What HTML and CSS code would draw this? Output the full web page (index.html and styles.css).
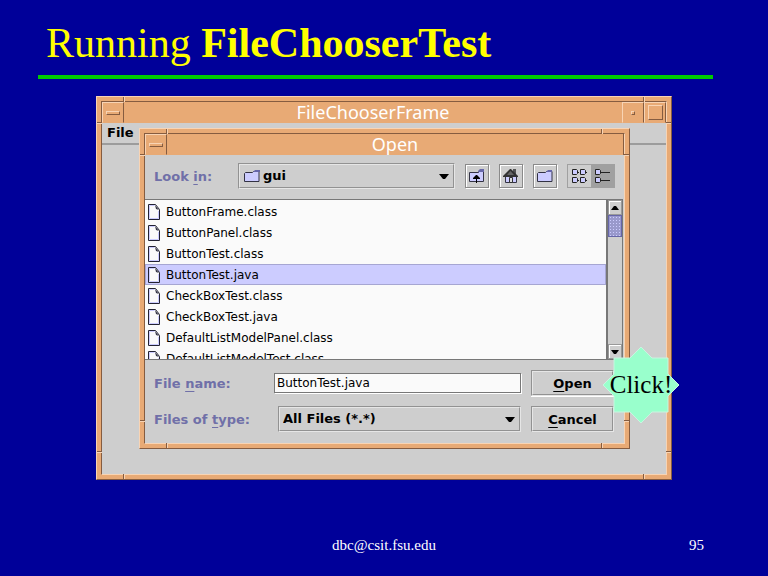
FILE: index.html
```html
<!DOCTYPE html>
<html lang="en">
<head>
  <meta charset="UTF-8" />
  <meta name="viewport" content="width=device-width, initial-scale=1.0" />
  <title>Running FileChooserTest</title>
  <link rel="stylesheet" href="styles.css">
</head>
<body>
  <header class="slide-header">
    <h1>Running <b>FileChooserTest</b></h1>
  </header>

  <main class="window frame">
    <i class="notch top left"></i><i class="notch top right"></i>
    <i class="notch bottom left"></i><i class="notch bottom right"></i>
    <i class="notch side west high"></i><i class="notch side east high"></i>
    <i class="notch side west low"></i><i class="notch side east low"></i>
    <div class="window-inner">
      <div class="titlebar">
        <button class="title-btn menu-btn" aria-label="Window menu"><span class="bar"></span></button>
        <h2>FileChooserFrame</h2>
        <button class="title-btn" aria-label="Minimize"><span class="dot"></span></button>
        <button class="title-btn" aria-label="Maximize"><span class="square"></span></button>
      </div>
      <nav class="menubar"><button class="menu-item">File</button></nav>
    </div>

    <section class="window dialog">
      <i class="notch top left"></i><i class="notch top right"></i>
      <i class="notch bottom left"></i><i class="notch bottom right"></i>
      <i class="notch side west high"></i><i class="notch side east high"></i>
      <i class="notch side west low"></i><i class="notch side east low"></i>
      <div class="window-inner">
        <div class="titlebar">
          <button class="title-btn menu-btn" aria-label="Window menu"><span class="bar"></span></button>
          <h2>Open</h2>
          <span class="title-end"></span>
        </div>

        <div class="toolbar">
          <label for="lookIn">Look <u>i</u>n:</label>
          <div class="combo folder-combo">
            <svg class="combo-icon" width="16" height="14" viewBox="0 0 16 14">
              <path d="M.5 12.500V4.500l1-1h7l1-1h5.500v10z" fill="#ccccff" stroke="#333344"/>
              <path d="M9 3l2-2h5v2z" fill="#6666a8"/>
            </svg>
            <select id="lookIn"><option>gui</option></select>
            <svg class="arrow" width="10" height="6" viewBox="0 0 10 6"><path d="M0 0h10L6 5H4z"/></svg>
          </div>
          <button class="tool-btn" aria-label="Up one level">
            <svg width="16" height="16" viewBox="0 0 16 16">
              <path d="M.5 13.500v-9h9v-1h5v10z" fill="#ccccff" stroke="#333344"/>
              <path d="M9 3l2-2h4v3H9z" fill="#6666a8"/>
              <path d="M7 7h1l3 3v1H8v4H7v-4H4v-1z"/>
            </svg>
          </button>
          <button class="tool-btn" aria-label="Home">
            <svg width="16" height="16" viewBox="0 0 16 16">
              <path d="M10 1h3v5h-3z" fill="#555"/>
              <path d="M2.500 7.500h11v7h-11z" fill="#ccccff" stroke="#333344"/>
              <path d="M7 1h1l7 7v1H0V8z" fill="#333"/>
              <path d="M4 7h7L7.500 3z" fill="#666"/>
              <path d="M6.500 9.500h3v5h-3z" fill="#ddd" stroke="#333"/>
            </svg>
          </button>
          <button class="tool-btn" aria-label="New folder">
            <svg width="16" height="14" viewBox="0 0 16 14">
              <path d="M.5 12.500V4.500l1-1h7l1-1h5.500v10z" fill="#ccccff" stroke="#333344"/>
              <path d="M9 3l2-2h4v2z" fill="#6666a8"/>
            </svg>
          </button>
          <div class="view-toggle">
            <button aria-label="List">
              <svg width="16" height="14" viewBox="0 0 16 14">
                <path d="M1 1h4v4H1zM9 1h4v4H9zM1 9h4v4H1zM9 9h4v4H9z" fill="#ccccff"/>
                <path d="M.5.5h4l1 1v3l-1 1h-4zM8.500.5h4l1 1v3l-1 1h-4zM.5 8.500h4l1 1v3l-1 1h-4zM8.500 8.500h4l1 1v3l-1 1h-4zM5 3.500h2M13 3.500h2M5 11.500h2M13 11.500h2" fill="none" stroke="#222"/>
              </svg>
            </button>
            <button class="pressed" aria-label="Details">
              <svg width="16" height="14" viewBox="0 0 16 14">
                <path d="M1 1h4v4H1zM1 9h4v4H1z" fill="#ccccff"/>
                <path d="M.5.5h4l1 1v3l-1 1h-4zM.5 8.500h4l1 1v3l-1 1h-4zM6 3.500h9M6 11.500h9" fill="none" stroke="#222"/>
              </svg>
            </button>
          </div>
        </div>

        <div class="file-pane">
          <ul class="file-list" id="fileList"></ul>
          <div class="scrollbar">
            <button aria-label="Scroll up"><svg width="8" height="4" viewBox="0 0 8 4"><path d="M3 0h2l3 4H0z"/></svg></button>
            <div class="thumb"></div>
            <button class="down" aria-label="Scroll down"><svg width="8" height="4" viewBox="0 0 8 4"><path d="M0 0h8L5 4H3z"/></svg></button>
          </div>
        </div>

        <form class="controls" onsubmit="return false">
          <div class="row">
            <label for="fileName">File <u>n</u>ame:</label>
            <input type="text" id="fileName" value="ButtonTest.java" />
            <button class="action open"><u>O</u>pen</button>
          </div>
          <div class="row">
            <label for="fileType">Files of <u>t</u>ype:</label>
            <div class="combo type-combo">
              <select id="fileType"><option>All Files (*.*)</option></select>
              <svg class="arrow" width="10" height="6" viewBox="0 0 10 6"><path d="M0 0h10L6 5H4z"/></svg>
            </div>
            <button class="action" type="button"><u>C</u>ancel</button>
          </div>
        </form>
      </div>

      <div class="callout">
        <svg width="78" height="78" viewBox="0 0 78 78">
          <path d="M39 1l11 11h16v16l11 11-11 11v16H50L39 77 28 66H12V50L1 39l11-11V12h16z" fill="#99ffcc" stroke="#c8f5e0"/>
        </svg>
        <span>Click!</span>
      </div>
    </section>
  </main>

  <footer class="slide-footer">
    <span></span>
    <span>dbc@csit.fsu.edu</span>
    <span class="page">95</span>
  </footer>

  <script>
    const files = [
      'ButtonFrame.class',
      'ButtonPanel.class',
      'ButtonTest.class',
      'ButtonTest.java',
      'CheckBoxTest.class',
      'CheckBoxTest.java',
      'DefaultListModelPanel.class',
      'DefaultListModelTest.class'
    ];
    const list = document.getElementById('fileList');
    const fileName = document.getElementById('fileName');

    const icon = `
      <svg width="12" height="16" viewBox="0 0 12 16">
        <path d="M.5.5h7l4 5v10H.5z" fill="#fafafa" stroke="#222233"/>
        <path d="M1.500 14.500v-13h5M2 14.500h8.500V7" fill="none" stroke="#ccccff"/>
        <path d="M7 1l4 5-3-1z" fill="#333344"/>
      </svg>`;

    function renderList(selected) {
      list.innerHTML = '';
      files.forEach(name => {
        const item = document.createElement('li');
        item.innerHTML = `<button class="file">${icon}${name}</button>`;
        if (name === selected) item.classList.add('selected');
        item.addEventListener('click', () => {
          fileName.value = name;
          renderList(name);
        });
        list.appendChild(item);
      });
    }

    renderList(fileName.value);
  </script>
</body>
</html>
```
FILE: styles.css
```css
* {
  box-sizing: border-box;
}

body {
  margin: 0;
  min-height: 100vh;
  display: flex;
  flex-direction: column;
  background: #000099;
  font-family: "Liberation Serif", serif;
}

svg {
  display: block;
  flex-shrink: 0;
}

button, input, select {
  margin: 0;
  padding: 0;
  border: none;
  border-radius: 0;
  background: none;
  color: #000;
  font: bold 13px "DejaVu Sans", sans-serif;
}

.slide-header {
  margin: 0 55px 0 38px;
  padding: 19px 8px 8px;
  border-bottom: 4px solid #00cc00;
}

.slide-header h1 {
  margin: 0;
  color: #ffff00;
  font-size: 42px;
  font-weight: normal;
  line-height: 48px;
}

/* window decoration */
.window {
  position: relative;
  padding: 4px;
  background: #e8aa75;
  border: 1px solid;
  border-color: #f8d4b4 #855c40 #855c40 #f8d4b4;
}

.window-inner {
  height: 100%;
  background: #cecece;
  border: 1px solid;
  border-color: #855c40 #f8d4b4 #f8d4b4 #855c40;
}

.frame {
  flex: 1;
  display: flex;
  flex-direction: column;
  width: 75%;
  margin: 17px auto 0;
}

.frame > .window-inner {
  flex: 1;
}

.notch {
  position: absolute;
  width: 2px;
  height: 5px;
  border-left: 1px solid #855c40;
  border-right: 1px solid #f8d4b4;
}

.notch.top { top: 0; }
.notch.bottom { bottom: 0; }
.notch.left { left: 26px; }
.notch.right { right: 26px; }

.notch.side {
  width: 5px;
  height: 2px;
  border: none;
  border-top: 1px solid #855c40;
  border-bottom: 1px solid #f8d4b4;
}

.notch.west { left: 0; }
.notch.east { right: 0; }
.notch.high { top: 25px; }
.notch.low { bottom: 26px; }

.titlebar {
  display: flex;
  height: 21px;
  background: #e8aa75;
}

.titlebar h2 {
  flex: 1;
  margin: 0;
  color: #fff;
  font: 18px/20px "Noto Sans", sans-serif;
  text-align: center;
}

.title-btn {
  display: flex;
  align-items: center;
  justify-content: center;
  width: 22px;
  border: 1px solid;
  border-color: #f8d4b4 #855c40 #e8aa75 #f8d4b4;
}

.title-end {
  width: 1px;
  background: #855c40;
}

.bar, .dot, .square {
  border: 1px solid;
  border-color: #f8d4b4 #855c40 #855c40 #f8d4b4;
}

.bar {
  width: 14px;
  height: 4px;
}

.dot {
  width: 4px;
  height: 4px;
}

.square {
  width: 15px;
  height: 15px;
}

.menubar {
  height: 22px;
  border-bottom: 2px solid #9c9c9c;
}

.menu-item {
  padding: 0 5px;
  line-height: 19px;
}

/* open dialog */
.dialog {
  position: absolute;
  top: 31px;
  left: 42px;
  right: 41px;
}

label {
  color: #7070a8;
  font: bold 13px "DejaVu Sans", sans-serif;
}

u {
  text-underline-offset: 3px;
}

.toolbar {
  display: flex;
  align-items: center;
  gap: 10px;
  padding: 8px 9px 10px;
}

.toolbar label {
  flex: 0 0 74px;
}

.combo {
  position: relative;
  flex: 1;
  height: 26px;
  border: 2px groove #e6e6e6;
  background: #cecece;
}

.combo select {
  appearance: none;
  width: 100%;
  height: 100%;
  padding: 0 20px 2px 3px;
}

.combo.folder-combo select {
  padding-left: 23px;
}

.combo-icon {
  position: absolute;
  top: 4px;
  left: 4px;
  pointer-events: none;
}

.arrow {
  position: absolute;
  top: 9px;
  right: 4px;
  pointer-events: none;
}

.tool-btn {
  display: flex;
  align-items: center;
  justify-content: center;
  width: 24px;
  height: 24px;
  border: 1px solid #8a8a8a;
  box-shadow: inset 1px 1px #fff, 1px 1px #fff;
}

.view-toggle {
  display: flex;
  width: 48px;
  height: 24px;
  border: 1px solid #a0a0a0;
}

.view-toggle button {
  flex: 1;
  display: flex;
  align-items: center;
  justify-content: center;
}

.view-toggle .pressed {
  background: #a0a0a0;
}

.file-pane {
  display: flex;
  height: 161px;
  margin-right: 1px;
  border: 1px solid #777;
  border-left: none;
  box-shadow: inset 0 1px #aaa;
}

.file-list {
  flex: 1;
  margin: 0;
  padding: 1px 0 0;
  overflow: hidden;
  list-style: none;
  background: #fafafa;
}

.file-list li {
  height: 21px;
  border: 1px solid transparent;
}

.file-list .selected {
  background: #ccccff;
  border-color: #a6a6d2;
}

.file {
  display: flex;
  align-items: center;
  gap: 6px;
  width: 100%;
  height: 19px;
  padding-left: 2px;
  font-size: 12px;
  font-weight: normal;
}

.scrollbar {
  display: flex;
  flex-direction: column;
  width: 16px;
  border-left: 2px solid #777;
}

.scrollbar button {
  display: flex;
  align-items: center;
  justify-content: center;
  height: 15px;
  border: 1px solid #999;
  box-shadow: inset 1px 1px #fff;
}

.scrollbar .down {
  margin-top: auto;
}

.thumb {
  height: 22px;
  border: 1px solid #6666a8;
  background: radial-gradient(#ccccff 1px, transparent 1px) 0 0 / 3px 3px #9999cc;
}

.controls {
  display: flex;
  flex-direction: column;
  gap: 10px;
  padding: 10px 10px 11px 9px;
}

.row {
  display: flex;
  align-items: center;
}

.row label {
  flex: 0 0 120px;
}

.row input {
  flex: 1;
  min-width: 0;
  height: 20px;
  padding: 0 2px;
  border: 1px solid #777;
  background: #fafafa;
  box-shadow: 1px 1px #fff;
  font-size: 12px;
  font-weight: normal;
}

.type-combo {
  margin-left: 4px;
}

.action {
  width: 83px;
  height: 26px;
  margin-left: 10px;
  border: 2px groove #e6e6e6;
}

.open {
  box-shadow: 0 1px #fff;
}

/* star over the Open button */
.callout {
  position: absolute;
  right: -51px;
  bottom: 24px;
  display: grid;
  place-items: center;
}

.callout svg, .callout span {
  grid-area: 1 / 1;
}

.callout span {
  font-size: 25px;
}

.slide-footer {
  display: grid;
  grid-template-columns: 1fr auto 1fr;
  padding: 57px 64px 22px;
  color: #fff;
  font-size: 15px;
  line-height: 17px;
}

.page {
  text-align: right;
}
```
